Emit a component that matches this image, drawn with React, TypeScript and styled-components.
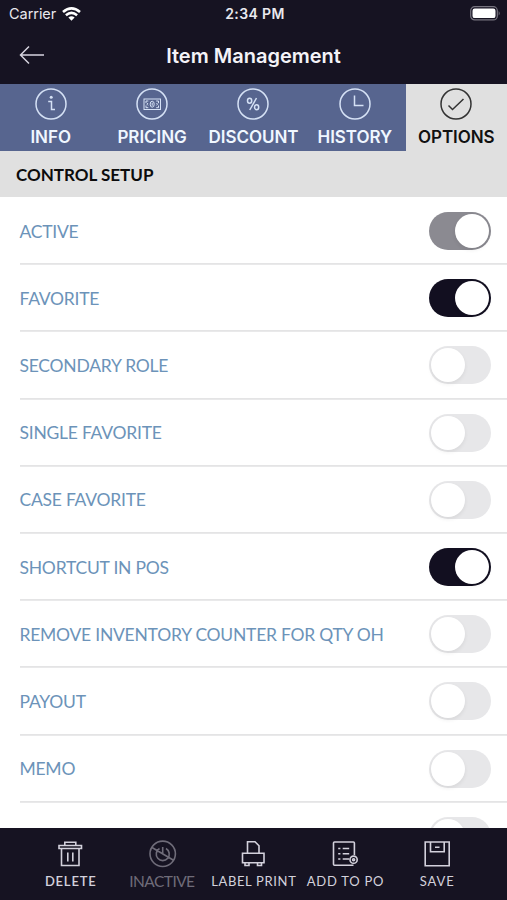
import React from "react";
import styled, { createGlobalStyle } from "styled-components";

const GlobalStyle = createGlobalStyle`
  * { box-sizing: border-box; }
  body { margin: 0; background: #fff; }
`;

const Screen = styled.div`
  width: 507px;
  height: 900px;
  display: flex;
  flex-direction: column;
  overflow: hidden;
  background: #fff;
  font-family: Lato, "Liberation Sans", sans-serif;
`;

const StatusBar = styled.div`
  flex: none;
  height: 27px;
  display: grid;
  grid-template-columns: 1fr auto 1fr;
  align-items: center;
  padding: 0 6px 0 9px;
  background: #161322;
  color: #e9e9ee;
  font: 400 14.5px/27px Inter, sans-serif;
`;

const Carrier = styled.div`
  display: flex;
  align-items: center;
  gap: 6px;
  letter-spacing: -0.05px;
`;

const Clock = styled.div`
  font-weight: 600;
  font-size: 14px;
  letter-spacing: 0.4px;
`;

const Battery = styled.svg`
  justify-self: end;
`;

const TitleBar = styled.header`
  flex: none;
  height: 57px;
  display: grid;
  grid-template-columns: 60px 1fr 60px;
  align-items: center;
  background: #161322;
`;

const BackButton = styled.button`
  border: 0;
  padding: 0 0 2px 19px;
  background: none;
  display: flex;
`;

const Title = styled.h1`
  margin: 0;
  text-align: center;
  color: #f4f3f8;
  font: 600 20px/28px Inter, sans-serif;
  letter-spacing: 0;
`;

const Tabs = styled.nav`
  flex: none;
  height: 67px;
  display: grid;
  grid-template-columns: repeat(5, 1fr);
`;

const Tab = styled.button<{ $active?: boolean }>`
  border: 0;
  padding: 4px 0 0;
  display: flex;
  flex-direction: column;
  align-items: center;
  background: ${(p) => (p.$active ? "#e0e0e0" : "#57658f")};
  color: ${(p) => (p.$active ? "#111" : "#f0f7ff")};
  font: 600 17px/20px Inter, sans-serif;
  letter-spacing: -0.05px;
  white-space: nowrap;
`;

const TabIcon = styled.svg<{ $active?: boolean }>`
  flex: none;
  width: 32px;
  height: 32px;
  margin-bottom: 7px;
  fill: none;
  stroke: ${(p) => (p.$active ? "#333" : "#d5e1f5")};
  stroke-width: 1.5;
`;

const SectionTitle = styled.h2`
  flex: none;
  height: 46px;
  margin: 0;
  padding-left: 16px;
  background: #e0e0e0;
  color: #0c0c0c;
  font: 700 17px/47px Lato, sans-serif;
`;

const List = styled.div`
  flex: 1;
  min-height: 0;
  overflow: hidden;
`;

const Row = styled.div`
  height: 67.2px;
  margin-left: 19.5px;
  padding-right: 16px;
  display: flex;
  align-items: center;
  justify-content: space-between;
  box-shadow: 0 1px 0 #e9e9ea;
  border-bottom: 1px solid #e4e4e5;
  color: #6c93b9;
  font-size: 17.5px;
  line-height: 24px;
  letter-spacing: -0.24px;
`;

const RowLabel = styled.span`
  padding-top: 3px;
`;

const toggleColors = { muted: "#8b8a91", on: "#120f20", off: "#e7e7e9" };
type ToggleState = keyof typeof toggleColors;

const Toggle = styled.span<{ $state: ToggleState }>`
  flex: none;
  width: 62.5px;
  height: 38px;
  margin-top: 2px;
  padding: 2px;
  border-radius: 19px;
  display: flex;
  justify-content: ${(p) => (p.$state === "off" ? "flex-start" : "flex-end")};
  background: ${(p) => toggleColors[p.$state]};
`;

const Knob = styled.span`
  width: 34px;
  height: 34px;
  border-radius: 50%;
  background: #fff;
  box-shadow: 0 2px 4px rgba(0, 0, 0, 0.07);
`;

const BottomBar = styled.footer`
  flex: none;
  height: 72px;
  padding: 0 24.5px;
  display: grid;
  grid-template-columns: repeat(5, 1fr);
  background: #161322;
`;

const Action = styled.button<{ $disabled?: boolean }>`
  border: 0;
  padding: 11px 0 0;
  background: none;
  display: flex;
  flex-direction: column;
  align-items: center;
  color: ${(p) => (p.$disabled ? "#6f6c79" : "#d3d1dc")};
  font: 400 ${(p) => (p.$disabled ? "15.5px" : "13px")} / 20px Lato, sans-serif;
  white-space: nowrap;
`;

const ActionLabel = styled.span<{ $tracking: number; $weight?: number }>`
  letter-spacing: ${(p) => p.$tracking}px;
  margin-right: -${(p) => Math.max(p.$tracking, 0)}px;
  font-weight: ${(p) => p.$weight ?? 400};
`;

const ActionIcon = styled.svg`
  flex: none;
  width: 30px;
  height: 30px;
  margin-bottom: 2px;
  fill: none;
  stroke: currentColor;
  stroke-width: 1.6;
`;

const tabs = [
  {
    label: "INFO",
    icon: (
      <>
        <path d="M13.2 13.5h3.3v8h3.5" />
        <circle cx="16.2" cy="9.2" r="1.5" fill="#d5e1f5" stroke="none" />
      </>
    ),
  },
  {
    label: "PRICING",
    icon: (
      <g strokeWidth="1">
        <rect x="8" y="11" width="16.5" height="10.5" />
        <ellipse cx="16.2" cy="16.2" rx="2" ry="3" />
        <path d="M16.2 14.7v3M10 15.2v-2.2h2.3M20.2 13h2.3v2.2M10 17.5v2.2h2.3M20.2 19.7h2.3v-2.2M12 15l-1 1.2 1 1.2M20.5 15l1 1.2-1 1.2" />
      </g>
    ),
  },
  {
    label: "DISCOUNT",
    icon: (
      <>
        <ellipse cx="12.6" cy="12.7" rx="2.1" ry="2.5" />
        <ellipse cx="19.6" cy="19.2" rx="2.1" ry="2.5" />
        <path d="M19.5 10l-6.8 12" />
      </>
    ),
  },
  { label: "HISTORY", icon: <path d="M15.5 7.5v10h9" /> },
  { label: "OPTIONS", active: true, icon: <path d="M8.5 17.5l4 4L23.5 11" /> },
];

const rows: { label: string; state: ToggleState }[] = [
  { label: "ACTIVE", state: "muted" },
  { label: "FAVORITE", state: "on" },
  { label: "SECONDARY ROLE", state: "off" },
  { label: "SINGLE FAVORITE", state: "off" },
  { label: "CASE FAVORITE", state: "off" },
  { label: "SHORTCUT IN POS", state: "on" },
  { label: "REMOVE INVENTORY COUNTER FOR QTY OH", state: "off" },
  { label: "PAYOUT", state: "off" },
  { label: "MEMO", state: "off" },
  { label: "", state: "off" },
];

const actions = [
  {
    label: "DELETE",
    tracking: 0.8,
    weight: 600,
    icon: (
      <path d="M4 6.5h22.500v3h-22.500zM9.800 6V3.200h11V6M6.500 10v16.500h17.500V10M12.800 13.500v9M17.800 13.500v9" />
    ),
  },
  {
    label: "INACTIVE",
    tracking: -0.55,
    disabled: true,
    icon: (
      <>
        <circle cx="15.7" cy="14.8" r="12.7" />
        <path d="M12.5 9.5a6.5 6.5 0 1 0 6.5 0M15.7 8v7M5 8.5l21.5 12.7" />
      </>
    ),
  },
  {
    label: "LABEL PRINT",
    tracking: 0.65,
    icon: (
      <path d="M9.5 14V2.8h7.5l4 4V14M4.5 14.2h21.5v9.5H4.5zM7 24v2.5h4V24M19.5 24v2.5h4V24" />
    ),
  },
  {
    label: "ADD TO PO",
    tracking: 0.75,
    icon: (
      <>
        <path d="M23.5 26.3H4.500a1 1 0 0 1-1-1V4a1 1 0 0 1 1-1h18.900a1 1 0 0 1 1 1v12" />
        <path d="M8.2 9.5h2.200M12.700 9.500h6.500M8.200 14.700h2.200M12.700 14.700h6.500M8.200 20h2.200M12.700 20h6.500" />
        <circle cx="23.6" cy="20.7" r="3.6" />
        <circle cx="23.6" cy="20.7" r="1" />
      </>
    ),
  },
  {
    label: "SAVE",
    tracking: 0.9,
    icon: (
      <path d="M3.2 3h24v23.7h-24zM8.5 3.5v9.3h13.7V3.5M13 8.2h4.5" />
    ),
  },
];

export default function App() {
  return (
    <Screen>
      <GlobalStyle />
      <StatusBar>
        <Carrier>
          Carrier
          <svg width="19" height="14" viewBox="0 0 19 14" fill="none" stroke="#fff" strokeWidth="2.6">
            <path d="M1 5Q9.5-2.3 18 5M3.9 8.2q5.6-4.7 11.2 0" />
            <path d="M9.5 13.8L6.4 10.6q3.1-2.5 6.2 0z" fill="#fff" stroke="none" />
          </svg>
        </Carrier>
        <Clock>2:34 PM</Clock>
        <Battery width="31" height="15" viewBox="0 0 31 15">
          <rect x="0.7" y="0.7" width="26.6" height="13.2" rx="4" fill="none" stroke="#77747f" strokeWidth="1.2" />
          <rect x="2.5" y="2.5" width="23" height="9.6" rx="2.2" fill="#fff" />
          <path d="M28.7 5q2 2.3 0 4.6z" fill="#77747f" />
        </Battery>
      </StatusBar>
      <TitleBar>
        <BackButton aria-label="Back">
          <svg width="26" height="20" viewBox="0 0 26 20" fill="none" stroke="#d6d4df" strokeWidth="1.5">
            <path d="M25 10H2M10 1.5L1.5 10l8.5 8.5" />
          </svg>
        </BackButton>
        <Title>Item Management</Title>
      </TitleBar>
      <Tabs>
        {tabs.map((t) => (
          <Tab key={t.label} $active={t.active}>
            <TabIcon $active={t.active} viewBox="0 0 32 32">
              <circle cx="16" cy="16" r="15" />
              {t.icon}
            </TabIcon>
            {t.label}
          </Tab>
        ))}
      </Tabs>
      <SectionTitle>CONTROL SETUP</SectionTitle>
      <List>
        {rows.map((r, i) => (
          <Row key={i}>
            <RowLabel>{r.label}</RowLabel>
            <Toggle $state={r.state}>
              <Knob />
            </Toggle>
          </Row>
        ))}
      </List>
      <BottomBar>
        {actions.map((a) => (
          <Action key={a.label} $disabled={a.disabled}>
            <ActionIcon viewBox="0 0 30 30">{a.icon}</ActionIcon>
            <ActionLabel $tracking={a.tracking} $weight={a.weight}>
              {a.label}
            </ActionLabel>
          </Action>
        ))}
      </BottomBar>
    </Screen>
  );
}
